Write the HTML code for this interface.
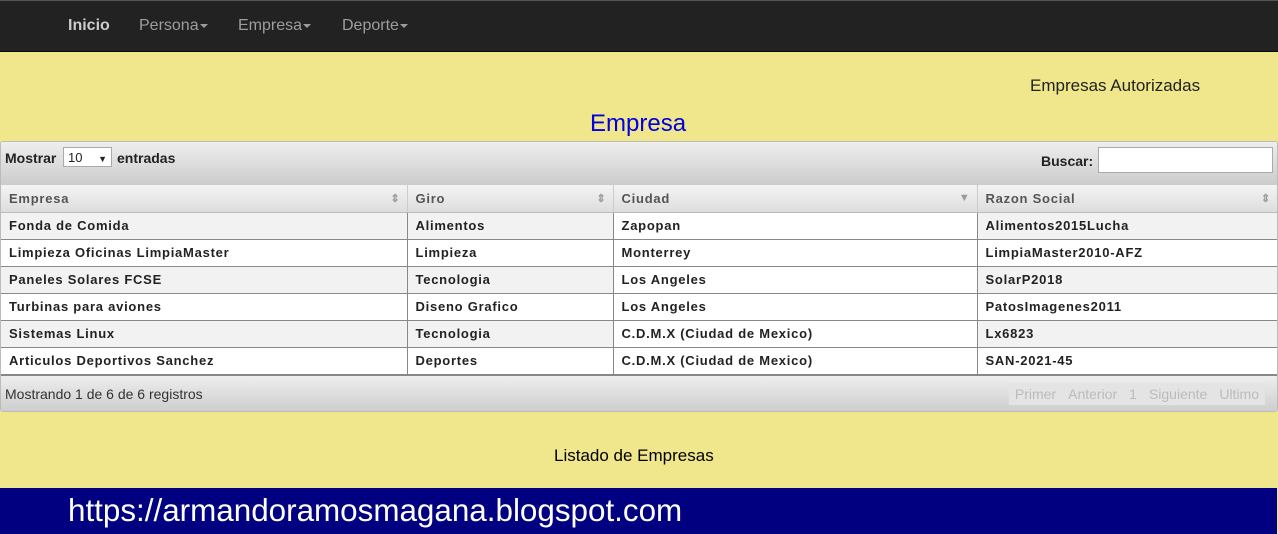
<!DOCTYPE html>
<html><head><meta charset="utf-8"><style>
*{box-sizing:border-box;margin:0;padding:0}
body{width:1278px;height:534px;background:#f0e68c;font-family:"Liberation Sans",Arial,sans-serif;position:relative;overflow:hidden}
.nav{position:absolute;left:0;top:0;width:1278px;height:52px;background:#222;border-top:1px solid #555;border-bottom:1px solid #080808}
.nav span{position:absolute;top:16px;font-size:16px;color:#9d9d9d}
.caret{display:inline-block;border-top:4px solid #9d9d9d;border-left:4px solid transparent;border-right:4px solid transparent;vertical-align:middle;margin-left:1px}
.t1{position:absolute;left:1030px;top:76px;font-size:17px;color:#222}
.t2{position:absolute;left:590px;top:110px;font-size:24px;color:#0000e0}
.panel{position:absolute;left:0;top:141px;width:1278px;height:271px;border:1px solid #bbb;border-radius:3px;background:#fff;overflow:hidden}
.tool{height:43px;background:linear-gradient(#eee,#ccc);font-size:14px;font-weight:bold;color:#222;position:relative}
.sel{position:absolute;left:62px;top:5px;width:49px;height:20px;border:1px solid #aaa;background:#fff;font-weight:normal;padding:2px 4px;font-size:13px}
table{border-collapse:collapse;width:1277px;font-size:13px;font-weight:bold;letter-spacing:.75px}
th{height:27px;text-align:left;padding-left:8px;color:#555;background:linear-gradient(#f4f4f4,#ddd);border-right:1px solid #ccc;border-bottom:1px solid #bbb;position:relative}
th i{position:absolute;right:6px;top:7px;font-style:normal;font-size:11px;color:#999}
td{height:27px;padding-left:8px;color:#222;border-right:1px solid #888;border-bottom:1px solid #888}
tr.o td{background:#f2f2f2}
.foot{height:38px;background:linear-gradient(#eee,#ccc);position:relative;font-size:14px;color:#333;border-top:1px solid #888}
.pg{position:absolute;right:12px;top:7px;display:flex;font-size:14px;color:#bbb;background:#e4e4e4}
.pg span{padding:3px 6px}
.t3{position:absolute;left:554px;top:446px;font-size:17px;color:#000}
.blog{position:absolute;left:0;top:488px;width:1277px;height:46px;background:#000080;color:#fff;font-size:31.4px;padding:5px 0 0 68px}
</style></head><body>
<div class="nav">
<span style="left:68px;color:#ccc;font-weight:bold">Inicio</span>
<span style="left:139px">Persona<b class="caret"></b></span>
<span style="left:238px">Empresa<b class="caret"></b></span>
<span style="left:342px">Deporte<b class="caret"></b></span>
</div>
<div class="t1">Empresas Autorizadas</div>
<div class="t2">Empresa</div>
<div class="panel">
<div class="tool"><span style="position:absolute;left:4px;top:8px">Mostrar</span><div class="sel">10 <span style="font-size:9px;margin-left:12px">▼</span></div><span style="position:absolute;left:116px;top:8px">entradas</span>
<span style="position:absolute;left:1040px;top:11px">Buscar:</span><div style="position:absolute;left:1097px;top:5px;width:175px;height:26px;border:1px solid #aaa;background:#fff"></div></div>
<table>
<tr><th style="width:406px">Empresa<i>⇕</i></th><th style="width:206px">Giro<i>⇕</i></th><th style="width:364px">Ciudad<i>▼</i></th><th>Razon Social<i>⇕</i></th></tr>
<tr class="o"><td>Fonda de Comida</td><td>Alimentos</td><td style="background:#fff">Zapopan</td><td>Alimentos2015Lucha</td></tr>
<tr><td>Limpieza Oficinas LimpiaMaster</td><td>Limpieza</td><td>Monterrey</td><td>LimpiaMaster2010-AFZ</td></tr>
<tr class="o"><td>Paneles Solares FCSE</td><td>Tecnologia</td><td style="background:#fff">Los Angeles</td><td>SolarP2018</td></tr>
<tr><td>Turbinas para aviones</td><td>Diseno Grafico</td><td>Los Angeles</td><td>PatosImagenes2011</td></tr>
<tr class="o"><td>Sistemas Linux</td><td>Tecnologia</td><td style="background:#fff">C.D.M.X (Ciudad de Mexico)</td><td>Lx6823</td></tr>
<tr><td>Articulos Deportivos Sanchez</td><td>Deportes</td><td>C.D.M.X (Ciudad de Mexico)</td><td>SAN-2021-45</td></tr>
</table>
<div class="foot"><span style="position:absolute;left:4px;top:10px">Mostrando 1 de 6 de 6 registros</span>
<div class="pg"><span>Primer</span><span>Anterior</span><span>1</span><span>Siguiente</span><span>Ultimo</span></div></div>
</div>
<div class="t3">Listado de Empresas</div>
<div class="blog">https://armandoramosmagana.blogspot.com</div>
</body></html>
